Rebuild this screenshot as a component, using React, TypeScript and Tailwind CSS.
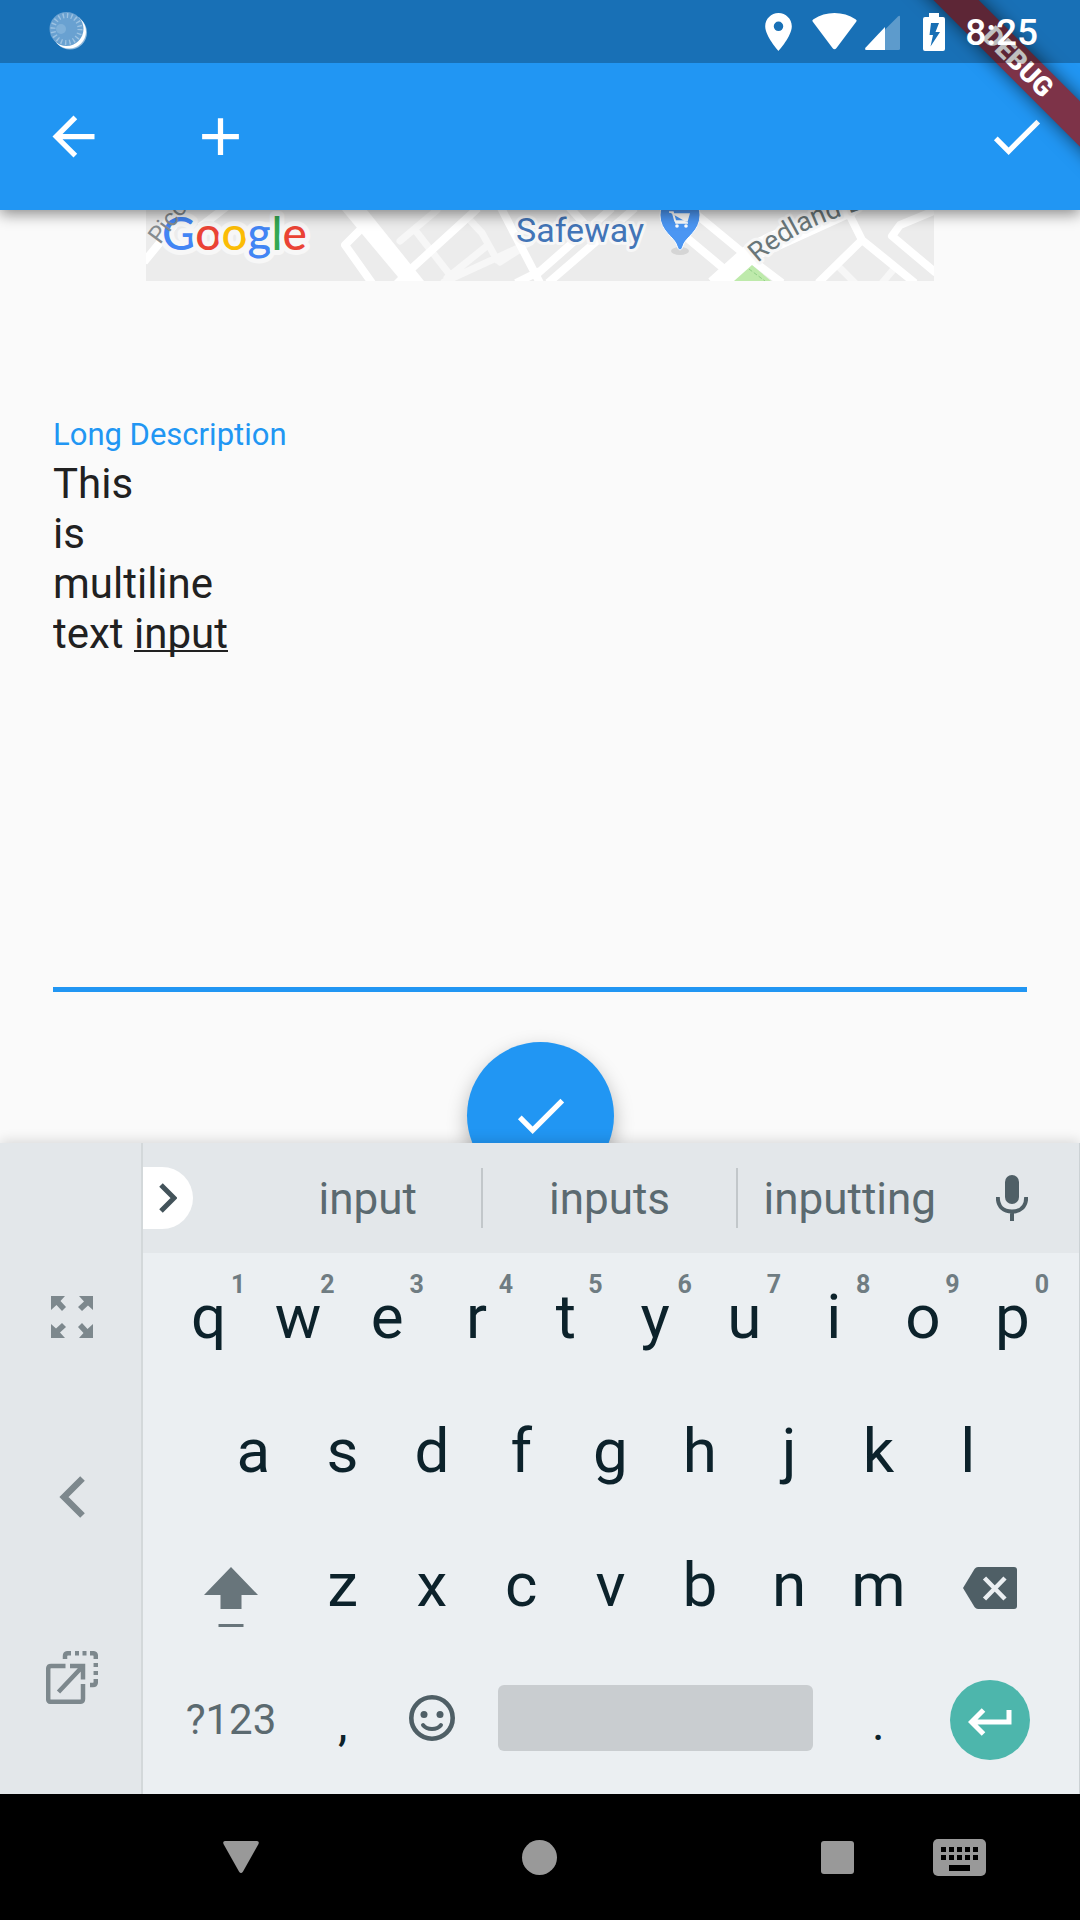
import type { ReactNode } from "react";

const TOP_ROW: [string, string][] = [
  ["q", "1"],
  ["w", "2"],
  ["e", "3"],
  ["r", "4"],
  ["t", "5"],
  ["y", "6"],
  ["u", "7"],
  ["i", "8"],
  ["o", "9"],
  ["p", "0"],
];
const HOME_ROW = ["a", "s", "d", "f", "g", "h", "j", "k", "l"];
const BOTTOM_ROW = ["z", "x", "c", "v", "b", "n", "m"];

const CHECK = "M9 16.17L4.83 12l-1.42 1.41L9 19 21 7l-1.41-1.41z";

function Glyph({ d, className }: { d: string; className: string }) {
  return (
    <svg viewBox="0 0 24 24" className={className} fill="currentColor" aria-hidden="true">
      <path d={d} />
    </svg>
  );
}

function Key({ label, hint }: { label: string; hint?: string }) {
  return (
    <button
      type="button"
      className="relative flex h-[134px] min-w-0 flex-[2] items-center justify-center pb-[6px] text-[62px] leading-[62px] text-[#0c222b]"
    >
      {label}
      {hint && (
        <span className="absolute top-[17px] right-2 text-[25px] leading-[30px] font-bold text-[#6f7c82]">{hint}</span>
      )}
    </button>
  );
}

function IconKey({ label, className, children }: { label: string; className: string; children: ReactNode }) {
  return (
    <button type="button" aria-label={label} className={`flex h-[134px] min-w-0 items-center justify-center ${className}`}>
      {children}
    </button>
  );
}

function StatusBar() {
  return (
    <div className="relative z-20 flex h-[63px] items-center justify-between bg-black/25 pr-[42px] pl-12 text-white">
      <svg viewBox="0 0 42 42" className="mb-0.5 size-[42px]" aria-hidden="true">
        <circle cx="22" cy="22.500" r="17" fill="#8fb9dc" />
        <circle cx="21" cy="21.500" r="17" fill="#fff" />
        <circle cx="18.500" cy="19" r="17" fill="#69a1d1" />
        <circle cx="18.500" cy="19" r="13.500" fill="none" stroke="#9cc2e2" strokeWidth="5" strokeDasharray="1.400 2.840" />
        <circle cx="13" cy="19" r="5" fill="#7fb0d9" />
      </svg>
      <div className="flex items-center">
        <svg viewBox="5 2 14 20" className="h-[38px] w-[27px]" fill="currentColor" aria-hidden="true">
          <path d="M12 2C8.130 2 5 5.130 5 9c0 5.250 7 13 7 13s7-7.750 7-13c0-3.870-3.130-7-7-7zm0 9.500a2.500 2.500 0 0 1 0-5 2.500 2.500 0 0 1 0 5z" />
        </svg>
        <svg viewBox="0 0 45 37" className="ml-5 h-[37px] w-[45px]" fill="currentColor" aria-hidden="true">
          <path d="M1 9Q-.5 7.500 1.500 6.300Q11 0 22.500 0T43.500 6.300Q45.500 7.500 44 9L24.500 35Q22.500 37.500 20.500 35Z" />
        </svg>
        <svg viewBox="0 0 35 35" className="mt-0.5 ml-2 size-[35px]" fill="currentColor" aria-hidden="true">
          <path d="M20 14.500L33 1.500Q35 0 35 2V33.500Q35 35 33.500 35H20Z" opacity=".3" />
          <path d="M20 12V35H1.500Q-1 35 .7 32.500Z" />
        </svg>
        <svg viewBox="0 0 22 38" className="ml-[23px] h-[38px] w-[22px]" fill="currentColor" aria-hidden="true">
          <path
            fillRule="evenodd"
            d="M6 0h10v4h4q2 0 2 2v30q0 2-2 2H2q-2 0-2-2V6q0-2 2-2h4zM8 10L6.500 22H10L7.500 33.500L17 19H12.500L16 10z"
          />
        </svg>
        <time className="mt-0.5 ml-5 text-[37px] leading-[42px] font-medium">8:25</time>
      </div>
    </div>
  );
}

function MapStrip() {
  return (
    <svg
      viewBox="0 0 788 71"
      preserveAspectRatio="xMidYMax slice"
      className="block h-[71px] w-full shrink-0 bg-[#ececec]"
      role="img"
      aria-label="Map near Safeway"
      fontFamily="Roboto, sans-serif"
    >
      <g fill="none" stroke="#f7f7f7" strokeWidth="7" strokeLinecap="round" strokeLinejoin="round">
        <path d="M254 31L291 0M269 20L304 65M322 8L336 23L351 50M342 35L301 68M298 72L385 32M354 52L376 38" />
        <path d="M694 58L709 73M747 60L736 73" />
      </g>
      <g fill="none" stroke="#fff" strokeWidth="8" strokeLinejoin="round">
        <path d="M214 20L199 35L226 73M264 60L332 -2M355 -2L394 73M391 64L466 -2M402 73L489 -2M370 73L396 60M422 -4L446 22" />
        <path d="M545 0L602 47L636 73M534 22L577 58M700 -2L716 30L672 73M716 30L769 73M788 1L754 15L746 26L790 63" />
        <path d="M-2 52L34 8M54 17L80 -3" />
        <path d="M569 76L609 40L706 -4" strokeWidth="20" />
      </g>
      <path d="M196 0H221L278 71H248L252 67Z" fill="#fff" />
      <path d="M606 55L588 71H625Z" fill="#beeaab" />
      <path d="M603 59L619 71" stroke="#8fcf86" strokeWidth="1" strokeDasharray="4 2" />
      <g stroke="#f7f7f7" strokeWidth="6" strokeLinejoin="round" paintOrder="stroke">
        <text x="370" y="32" fontSize="34" fill="#4375b7">
          Safeway
        </text>
        <path id="redland-road" d="M612 53Q642 25 690 8T760 -14" fill="none" stroke="none" />
        <text fontSize="27" fill="#697679">
          <textPath href="#redland-road">Redland Dr</textPath>
        </text>
        <text x="16" y="40" fontSize="46" fontFamily="Lato, sans-serif" fontWeight="500" strokeWidth="10">
          <tspan fill="#4285f4">G</tspan>
          <tspan fill="#ea4335">o</tspan>
          <tspan fill="#fbbc05">o</tspan>
          <tspan fill="#4285f4">g</tspan>
          <tspan fill="#34a853">l</tspan>
          <tspan fill="#ea4335">e</tspan>
        </text>
        <text transform="translate(14 35) rotate(-53)" fontSize="24" fill="#858b8e" stroke="none">
          Pico
        </text>
      </g>
      <ellipse cx="534" cy="41" rx="9" ry="4" fill="#d5d5d5" />
      <path d="M534 40Q532 40 531 36C529 27 514 22 514 5A20 20 0 0 1 554 5C554 22 539 27 537 36Q536 40 534 40Z" fill="#4b96f3" stroke="#fff" strokeWidth="1" />
      <path d="M523 2h4l3 11h12M527 4h16l-2 7h-12z" fill="#fff" stroke="#fff" strokeWidth="1.500" />
      <circle cx="531" cy="16" r="1.800" fill="#fff" />
      <circle cx="540" cy="16" r="1.800" fill="#fff" />
    </svg>
  );
}

function SidePanel() {
  return (
    <div className="flex w-[143px] shrink-0 flex-col items-center gap-[120px] border-r-2 border-[#d3d8da] bg-[#e3e7ea] pt-36 pl-0.5 text-[#7d888d]">
      <button type="button" aria-label="Full width keyboard" className="flex size-[60px] items-center justify-center">
        <svg viewBox="0 0 42 42" className="size-[42px]" fill="currentColor" aria-hidden="true">
          {[0, 90, 180, 270].map((angle) => (
            <path key={angle} transform={`rotate(${angle} 21 21)`} d="M0 0H14L9.500 5L15 11L11 15L5.500 9L0 14Z" />
          ))}
        </svg>
      </button>
      <button type="button" aria-label="Move keyboard left" className="flex size-[60px] items-center justify-center">
        <svg viewBox="0 0 26 42" className="h-[42px] w-[26px]" fill="none" stroke="currentColor" strokeWidth="6.500" aria-hidden="true">
          <path d="M23.500 2.500L5 21L23.500 39.500" />
        </svg>
      </button>
      <button type="button" aria-label="Float keyboard" className="flex size-[60px] items-center justify-center">
        <svg viewBox="0 0 52 53" className="h-[53px] w-[52px]" fill="none" stroke="currentColor" strokeWidth="4.500" aria-hidden="true">
          <path d="M19.500 15H5Q2.200 15 2.200 18V48Q2.200 50.800 5 50.800H34Q37 50.800 37 48V33" />
          <path d="M24 15H37V28.500M37 15L12.500 41" />
          <path d="M19 8V5Q19 2.200 22 2.200H25M29 2.200h4M36.500 2.200h4M44 2.200H47Q49.800 2.200 49.800 5V8M49.800 12v4M49.800 20v4M49.800 28V31Q49.800 34 47 34H44" />
        </svg>
      </button>
    </div>
  );
}

function SuggestionBar() {
  const item = "flex h-full min-w-0 items-center justify-center pt-0.5 text-[44px] leading-[52px] text-[#5b6a70]";
  const rule = "h-[60px] w-[2px] shrink-0 bg-[#c2c7ca]";
  return (
    <div className="flex h-[110px] items-center bg-[#e3e7ea]">
      <button
        type="button"
        aria-label="More tools"
        className="flex h-[62px] w-[50px] shrink-0 items-center justify-center rounded-r-full bg-white text-[#43535a]"
      >
        <svg viewBox="0 0 18 30" className="h-[30px] w-[18px]" fill="none" stroke="currentColor" strokeWidth="5" aria-hidden="true">
          <path d="M2 2L15 15L2 28" />
        </svg>
      </button>
      <div className="ml-[61px] flex h-full flex-1 items-center">
        <button type="button" className={`flex-[228] ${item}`}>input</button>
        <span className={rule} />
        <button type="button" className={`flex-[253] ${item}`}>inputs</button>
        <span className={rule} />
        <button type="button" className={`flex-[225] ${item}`}>inputting</button>
      </div>
      <button type="button" aria-label="Voice input" className="mr-[17px] flex w-[100px] shrink-0 justify-center text-[#4f5f66]">
        <svg viewBox="0 0 32 46" className="h-[46px] w-8" aria-hidden="true">
          <rect x="9" y="0" width="14" height="29" rx="7" fill="currentColor" />
          <path d="M1.800 22C1.800 32 8 36.500 16 36.500S30.200 32 30.200 22M16 36V46" fill="none" stroke="currentColor" strokeWidth="4" />
        </svg>
      </button>
    </div>
  );
}

function Keyboard() {
  const punctuation =
    "flex h-[134px] min-w-0 flex-[2] items-center justify-center pt-1 text-[48px] leading-[54px] text-[#0c222b]";
  return (
    <section
      aria-label="Keyboard"
      className="relative z-10 flex shrink-0 bg-[#e3e7ea] shadow-[0_-2px_12px_rgba(0,0,0,0.14)]"
    >
      <SidePanel />
      <div className="flex min-w-0 flex-1 flex-col border-r border-[#ccd2d5] bg-[#ebeff2]">
        <SuggestionBar />
        <div className="flex flex-col pr-[22px] pb-[5px] pl-[21px]">
          <div className="flex">
            {TOP_ROW.map(([label, hint]) => (
              <Key key={label} label={label} hint={hint} />
            ))}
          </div>
          <div className="flex">
            <span className="flex-1" />
            {HOME_ROW.map((label) => (
              <Key key={label} label={label} />
            ))}
            <span className="flex-1" />
          </div>
          <div className="flex">
            <IconKey label="Shift" className="flex-[3] text-[#68757b]">
              <svg viewBox="0 0 54 60" className="mt-[18px] h-[60px] w-[54px]" fill="currentColor" aria-hidden="true">
                <path d="M27 0L54 28H37.500V42H16.500V28H0Z" />
                <path d="M14.500 57H39.500V60H14.500Z" />
              </svg>
            </IconKey>
            {BOTTOM_ROW.map((label) => (
              <Key key={label} label={label} />
            ))}
            <IconKey label="Backspace" className="flex-[3] text-[#4f5f66]">
              <svg viewBox="0 0 54 42" className="h-[42px] w-[54px]" fill="currentColor" aria-hidden="true">
                <path d="M15 0H51Q54 0 54 3V39Q54 42 51 42H15Q13 42 11.500 40L0 21L11.500 2Q13 0 15 0Z" />
                <path d="M21.500 11L42 32M42 11L21.500 32" stroke="#ebeff2" strokeWidth="4.500" />
              </svg>
            </IconKey>
          </div>
          <div className="flex">
            <button
              type="button"
              className="flex h-[134px] min-w-0 flex-[3] items-center justify-center pb-1 text-[42px] leading-[48px] text-[#5b6a70]"
            >
              ?123
            </button>
            <button type="button" className={punctuation}>
              ,
            </button>
            <IconKey label="Emoji" className="flex-[2] pb-2 text-[#4f5f66]">
              <svg viewBox="0 0 46 46" className="size-[46px]" fill="currentColor" aria-hidden="true">
                <circle cx="23" cy="23" r="20.700" fill="none" stroke="currentColor" strokeWidth="4.600" />
                <circle cx="15" cy="19.500" r="3.500" />
                <circle cx="31" cy="19.500" r="3.500" />
                <path d="M14 30Q17 34 23 34T32 30" fill="none" stroke="currentColor" strokeWidth="4" strokeLinecap="round" />
              </svg>
            </IconKey>
            <IconKey label="Space" className="flex-[8] pb-2">
              <span className="mx-[21px] h-[66px] flex-1 rounded-md bg-[#c9cdd0]" />
            </IconKey>
            <button type="button" className={punctuation}>
              .
            </button>
            <IconKey label="Enter" className="flex-[3] pb-1">
              <span className="flex size-20 items-center justify-center rounded-full bg-[#4db6ac] text-white">
                <svg viewBox="0 0 44 28" className="mt-1 h-7 w-11" fill="none" stroke="currentColor" strokeWidth="5" aria-hidden="true">
                  <path d="M41 2V14H4M15.500 2L3.500 14L15.500 26" />
                </svg>
              </span>
            </IconKey>
          </div>
        </div>
      </div>
    </section>
  );
}

function NavBar() {
  const cell = "flex h-[126px] items-center justify-center text-[#999]";
  return (
    <nav
      aria-label="System"
      className="relative z-10 grid shrink-0 grid-cols-[151fr_180fr_118fr_180fr_147fr_122fr_122fr_60fr] bg-black"
    >
      <button type="button" aria-label="Back" className={`col-start-2 ${cell}`}>
        <svg viewBox="0 0 36 32" className="h-8 w-9" fill="currentColor" aria-hidden="true">
          <path d="M2 0H34Q36.500 0 35.500 3L20 30.500Q18 33.500 16 30.500L.5 3Q-.5 0 2 0Z" />
        </svg>
      </button>
      <button type="button" aria-label="Home" className={`col-start-4 ${cell}`}>
        <span className="size-[35px] rounded-full bg-[#999]" />
      </button>
      <button type="button" aria-label="Recent apps" className={`col-start-6 ${cell}`}>
        <span className="size-[33px] rounded-[3px] bg-[#999]" />
      </button>
      <button type="button" aria-label="Switch keyboard" className={`col-start-7 ${cell}`}>
        <svg viewBox="0 0 53 37" className="h-[37px] w-[53px]" aria-hidden="true">
          <rect width="53" height="37" rx="5" fill="currentColor" />
          {[0, 1, 2, 3, 4].map((i) => (
            <g key={i}>
              <rect x={8 + i * 8} y="8" width="5" height="5" />
              <rect x={8 + i * 8} y="16" width="5" height="5" />
            </g>
          ))}
          <rect x="16" y="26" width="21" height="6" />
        </svg>
      </button>
    </nav>
  );
}

export default function App() {
  return (
    <div className="flex h-screen flex-col overflow-hidden bg-[#fafafa] font-[Roboto,sans-serif]">
      <header className="relative z-10 shrink-0 bg-[#2196f3] shadow-[0_4px_14px_rgba(0,0,0,0.45)]">
        <StatusBar />
        <div className="flex h-[147px] items-center text-white">
          <button type="button" aria-label="Back" className="flex size-[147px] items-center justify-center">
            <Glyph className="size-[63px]" d="M20 11H7.830l5.590-5.590L12 4l-8 8 8 8 1.410-1.410L7.830 13H20v-2z" />
          </button>
          <button type="button" aria-label="Add" className="flex size-[147px] items-center justify-center">
            <Glyph className="size-[63px]" d="M19 13h-6v6h-2v-6H5v-2h6V5h2v6h6v2z" />
          </button>
          <button type="button" aria-label="Save" className="mr-8 ml-auto flex size-[63px] items-center justify-center">
            <Glyph className="size-[63px]" d={CHECK} />
          </button>
        </div>
        <div className="pointer-events-none absolute top-0 right-0 flex size-[200px] items-start justify-end overflow-hidden">
          <div className="-mt-[38px] -mr-[88px] flex h-[200px] w-[300px] shrink-0 rotate-45 items-center justify-center">
            <span className="flex h-8 w-full items-center justify-center bg-[#7d3348] text-[27px] leading-8 font-black text-white shadow-[0_0_18px_rgba(0,0,0,0.6)]">
              DEBUG
            </span>
          </div>
        </div>
      </header>

      <main className="flex min-h-0 flex-1 flex-col overflow-hidden">
        <div className="shrink-0 px-[146px]">
          <MapStrip />
        </div>
        <form className="mt-[135px] flex shrink-0 flex-col px-[53px]">
          <label htmlFor="long-description" className="text-[31px] leading-[38px] text-[#2196f3]">
            Long Description
          </label>
          <div className="relative mt-[5px] flex">
            <textarea
              id="long-description"
              spellCheck={false}
              className="h-[533px] w-full resize-none overflow-hidden border-b-[5px] border-[#2196f3] bg-transparent text-[42px] leading-[50px] text-[#212121] outline-none"
              defaultValue={"This\nis\nmultiline\ntext input"}
            />
            <span className="pointer-events-none absolute top-[191px] left-[81px] h-[2px] w-[94px] bg-[#212121]" />
          </div>
          <button
            type="button"
            aria-label="Submit"
            className="mt-[50px] flex size-[147px] shrink-0 items-center justify-center self-center rounded-full bg-[#2196f3] text-white shadow-[0_8px_20px_rgba(0,0,0,0.28)]"
          >
            <Glyph className="size-[63px]" d={CHECK} />
          </button>
        </form>
      </main>

      <Keyboard />
      <NavBar />
    </div>
  );
}
